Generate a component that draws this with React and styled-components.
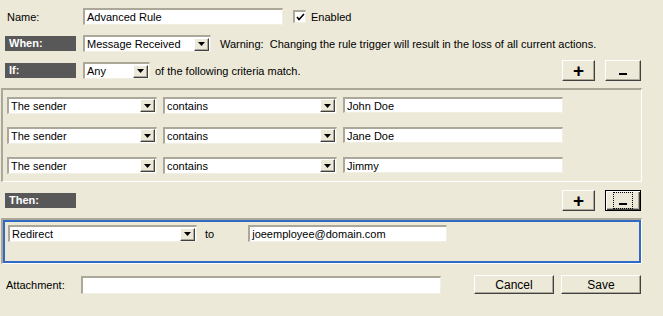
import React from 'react';
import styled, { createGlobalStyle } from 'styled-components';

const Global = createGlobalStyle`
  body {
    margin: 0;
    background: #ece9d8;
    font-family: "Liberation Sans", Arial, sans-serif;
    font-size: 11px;
    color: #000;
  }
`;

const Page = styled.div`
  width: 663px;
  height: 316px;
  padding-top: 8px;
  box-sizing: border-box;
  display: flex;
  flex-direction: column;
`;

const Row = styled.div`
  display: flex;
  align-items: center;
  height: ${(p) => p.$h || 17}px;
  margin-top: ${(p) => p.$mt || 0}px;
  padding-left: ${(p) => p.$pl || 0}px;
  padding-right: ${(p) => p.$pr || 0}px;
  gap: ${(p) => p.$gap || 0}px;
`;

const Label = styled.span`
  width: ${(p) => p.$w}px;
  flex: none;
`;

const Text = styled.span`
  margin-left: ${(p) => p.$ml || 0}px;
  white-space: pre;
`;

const Section = styled.div`
  width: 71px;
  height: 15px;
  background: #585858;
  color: #fff;
  font-weight: bold;
  line-height: 15px;
  padding-left: 4px;
  box-sizing: border-box;
  margin-left: 5px;
  margin-right: ${(p) => p.$mr || 0}px;
  flex: none;
`;

const Field = styled.div`
  display: flex;
  align-items: center;
  width: ${(p) => p.$w}px;
  height: ${(p) => p.$h || 17}px;
  box-sizing: border-box;
  background: #fff;
  border-style: solid;
  border-width: 2px 1px 1px 2px;
  border-color: #aca899 #f1efe2 #f1efe2 #aca899;
  padding-left: 2px;
  margin-left: ${(p) => p.$ml || 0}px;
  flex: none;
  white-space: pre;
`;

const SelectBox = styled(Field)`
  padding-right: 1px;
  justify-content: space-between;
`;

const ArrowBtn = styled.span`
  width: 15px;
  height: 13px;
  box-sizing: border-box;
  background: #ece9d8;
  border: 1px solid;
  border-color: #fff #404040 #404040 #fff;
  box-shadow: inset -1px -1px 0 #aca899;
  display: flex;
  align-items: center;
  justify-content: center;
`;

const Select = ({ w, ml, value }) => (
  <SelectBox $w={w} $ml={ml}>
    <span>{value}</span>
    <ArrowBtn>
      <svg width="7" height="4" viewBox="0 0 7 4">
        <path d="M0 0h7L3.5 4z" fill="#000" />
      </svg>
    </ArrowBtn>
  </SelectBox>
);

const Check = styled.span`
  width: 13px;
  height: 13px;
  box-sizing: border-box;
  background: #fff;
  border-style: solid;
  border-width: 2px 1px 1px 2px;
  border-color: #aca899 #f1efe2 #f1efe2 #aca899;
  margin-left: 10px;
  margin-right: 5px;
  display: flex;
  align-items: center;
  justify-content: center;
`;

const Spacer = styled.div`
  flex: 1;
`;

const Button = styled.button`
  width: ${(p) => p.$w}px;
  height: ${(p) => p.$h || 21}px;
  box-sizing: border-box;
  padding: 0;
  background: #ece9d8;
  font-family: inherit;
  font-size: ${(p) => p.$fs || 11}px;
  font-weight: ${(p) => (p.$bold ? 'bold' : 'normal')};
  color: #000;
  border: 1px solid;
  border-color: ${(p) => (p.$focus ? '#000' : '#fff #404040 #404040 #fff')};
  box-shadow: ${(p) =>
    p.$focus
      ? 'inset 1px 1px 0 #fff, inset -1px -1px 0 #404040, inset -2px -2px 0 #aca899'
      : 'inset -1px -1px 0 #aca899'};
  display: flex;
  align-items: center;
  justify-content: center;
  flex: none;
  line-height: 1;
`;

const Focus = styled.span`
  border: 1px dotted #000;
  height: 15px;
  padding: 0 5px;
  display: flex;
  align-items: center;
`;

const Etched = styled.div`
  margin-left: 1px;
  width: 641px;
  box-sizing: border-box;
  border-style: solid;
  border-width: 2px 1px 1px 2px;
  border-color: #aca899 #fff #fff #aca899;
  margin-top: ${(p) => p.$mt || 0}px;
`;

const Criteria = styled.div`
  display: flex;
  flex-direction: column;
  gap: 14px;
  padding: 7px 4px 8px 4px;
`;

const ActionBox = styled.div`
  border: 2px solid #316ac5;
  height: 43px;
  box-sizing: border-box;
  padding: 3px 3px;
`;

const Dash = styled.span`
  display: block;
  width: 8px;
  height: 2px;
  background: #000;
  margin-top: 6px;
`;

const rows = ['John Doe', 'Jane Doe', 'Jimmy'];

export default function App() {
  return (
    <Page>
      <Global />
      <Row $pl={7}>
        <Label $w={76}>Name:</Label>
        <Field $w={200}>Advanced Rule</Field>
        <Check>
          <svg width="9" height="8" viewBox="0 0 9 8">
            <path d="M1 4l2 2.5L8 1" stroke="#000" strokeWidth="1.6" fill="none" />
          </svg>
        </Check>
        <span>Enabled</span>
      </Row>

      <Row $mt={10}>
        <Section $mr={7}>When:</Section>
        <Select w={128} value="Message Received" />
        <Text $ml={9}>Warning:  Changing the rule trigger will result in the loss of all current actions.</Text>
      </Row>

      <Row $mt={8} $h={21} $pr={22}>
        <Section $mr={7}>If:</Section>
        <Select w={67} value="Any" />
        <Text $ml={5}>of the following criteria match.</Text>
        <Spacer />
        <Button $w={33} $fs={19} $bold>+</Button>
        <Button $w={36} $fs={19} $bold style={{ marginLeft: 10 }}>
          <Dash />
        </Button>
      </Row>

      <Etched $mt={7}>
        <Criteria>
          {rows.map((v) => (
            <Row key={v} $h={16}>
              <Select w={150} value="The sender" />
              <Select w={174} ml={6} value="contains" />
              <Field $w={220} $h={16} $ml={6}>{v}</Field>
            </Row>
          ))}
        </Criteria>
      </Etched>

      <Row $mt={8} $h={21} $pr={22}>
        <Section>Then:</Section>
        <Spacer />
        <Button $w={33} $fs={19} $bold>+</Button>
        <Button $w={36} $fs={19} $bold $focus style={{ marginLeft: 10 }}>
          <Focus>
            <Dash />
          </Focus>
        </Button>
      </Row>

      <Etched $mt={7}>
        <ActionBox>
          <Row>
            <Select w={189} value="Redirect" />
            <Text $ml={8}>to</Text>
            <Field $w={199} $ml={34}>joeemployee@domain.com</Field>
          </Row>
        </ActionBox>
      </Etched>

      <Row $mt={11} $h={19} $pl={6} $pr={22}>
        <Label $w={75}>Attachment:</Label>
        <Field $w={360} $h={18}></Field>
        <Spacer />
        <Button $w={80} $h={19} $fs={12}>Cancel</Button>
        <Button $w={80} $h={19} $fs={12} style={{ marginLeft: 7 }}>Save</Button>
      </Row>
    </Page>
  );
}
